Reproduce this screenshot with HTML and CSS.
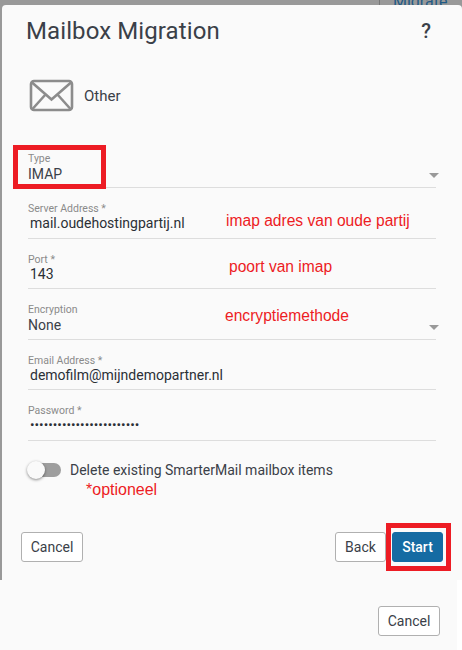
FILE: index.html
```html
<!DOCTYPE html>
<html lang="en">
<head>
    <meta charset="UTF-8">
    <meta name="viewport" content="width=device-width, initial-scale=1.0">
    <title>Mailbox Migration</title>
    <link rel="stylesheet" href="styles.css">
</head>
<body>
    <div class="backdrop">
        <div class="peek-link">Migrate</div>
        <div class="peek-line"></div>
        <div class="modal">
            <div class="modal-header">
                <h1 class="modal-title">Mailbox Migration</h1>
                <span class="help">?</span>
            </div>

            <div class="source">
                <svg class="source-icon" width="46" height="34" viewBox="0 0 46 34" fill="none" stroke="#8c8c8c" stroke-width="2.6">
                    <rect x="2" y="2" width="41" height="29" rx="3"/>
                    <path d="M3 3.5 L22.5 20.5 L42 3.5"/>
                    <path d="M3.5 30 L16.5 15.5"/>
                    <path d="M41.5 30 L28.5 15.5"/>
                </svg>
                <span class="source-name">Other</span>
            </div>

            <div class="fields">
                <div class="field">
                    <label class="field-label">Type</label>
                    <div class="field-select">IMAP</div>
                    <span class="caret"></span>
                </div>
                <div class="field">
                    <label class="field-label">Server Address *</label>
                    <div class="field-value">mail.oudehostingpartij.nl</div>
                    <span class="note note-server">imap adres van oude partij</span>
                </div>
                <div class="field">
                    <label class="field-label">Port *</label>
                    <div class="field-value">143</div>
                    <span class="note note-port">poort van imap</span>
                </div>
                <div class="field">
                    <label class="field-label">Encryption</label>
                    <div class="field-select">None</div>
                    <span class="caret"></span>
                    <span class="note note-encryption">encryptiemethode</span>
                </div>
                <div class="field">
                    <label class="field-label">Email Address *</label>
                    <div class="field-value">demofilm@mijndemopartner.nl</div>
                </div>
                <div class="field">
                    <label class="field-label">Password *</label>
                    <div class="field-value field-password">••••••••••••••••••••••••</div>
                </div>
            </div>

            <div class="toggle-row">
                <span class="toggle"><span class="toggle-knob"></span></span>
                <span class="toggle-label">Delete existing SmarterMail mailbox items</span>
            </div>
            <div class="note-optional">*optioneel</div>

            <div class="modal-footer">
                <button class="btn">Cancel</button>
                <div class="btn-group">
                    <button class="btn btn-back">Back</button>
                    <button class="btn btn-primary">Start</button>
                </div>
            </div>

            <div class="mark mark-type"></div>
            <div class="mark mark-start"></div>
        </div>
    </div>

    <div class="lower">
        <button class="btn">Cancel</button>
    </div>
</body>
</html>
```

FILE: styles.css
```css
* {
    margin: 0;
    padding: 0;
    box-sizing: border-box;
}

body {
    width: 462px;
    height: 650px;
    overflow: hidden;
    background: #fff;
    font-family: 'Roboto', sans-serif;
    color: #3a4048;
}

.backdrop {
    position: relative;
    height: 580px;
    padding: 5px 0 0 2px;
    background: #999;
    overflow: hidden;
}

.peek-link {
    position: absolute;
    left: 393px;
    top: -6px;
    font-size: 16px;
    line-height: 16px;
    color: #1f5a85;
}

.peek-line {
    position: absolute;
    left: 379px;
    top: 0;
    width: 1px;
    height: 5px;
    background: #777;
}

.modal {
    position: relative;
    height: 575px;
    background: #fafafa;
    border-radius: 4px 4px 0 0;
    padding: 0 26px;
}

.modal-header {
    display: flex;
    justify-content: space-between;
    align-items: center;
    height: 52px;
}

.modal-title {
    font-size: 24px;
    font-weight: 400;
    line-height: 52px;
    margin-left: -2px;
    letter-spacing: 0.1px;
}

.help {
    font-size: 20px;
    font-weight: 500;
    margin-right: 5px;
}

.source {
    display: flex;
    align-items: center;
    gap: 9px;
    height: 34px;
    margin-top: 22px;
    margin-left: 1px;
}

.source-name {
    font-size: 15px;
}

.fields {
    margin-top: 24.5px;
}

.field {
    position: relative;
    height: 50.6px;
    padding-top: 14px;
    border-bottom: 1px solid #ddd;
}

.field-label {
    display: block;
    font-size: 10.5px;
    line-height: 14px;
    color: #8a8a8a;
}

.field-select,
.field-value {
    font-size: 14px;
    line-height: 15px;
}

.field-select {
    padding-top: 1px;
}

.field-value {
    padding-left: 2px;
    color: #2b2f36;
}

.field-password {
    line-height: 12px;
    font-size: 13.5px;
}

.caret {
    position: absolute;
    right: -3px;
    bottom: 9px;
    width: 0;
    height: 0;
    border-left: 5px solid transparent;
    border-right: 5px solid transparent;
    border-top: 5px solid #999;
}

.note {
    position: absolute;
    font-family: 'Liberation Sans', sans-serif;
    font-size: 15.6px;
    line-height: 18px;
    color: #ed1c24;
}

.note-server {
    left: 198px;
    top: 24px;
}

.note-port {
    left: 201px;
    top: 19px;
}

.note-encryption {
    left: 197px;
    top: 18px;
}

.toggle-row {
    display: flex;
    align-items: center;
    gap: 9px;
    height: 20px;
    margin-top: 19px;
}

.toggle {
    position: relative;
    width: 31px;
    height: 14px;
    border-radius: 7px;
    background: #9e9e9e;
    margin-left: 2px;
}

.toggle-knob {
    position: absolute;
    left: -3px;
    top: -2px;
    width: 18px;
    height: 18px;
    border-radius: 50%;
    background: #fafafa;
    box-shadow: 0 1px 3px rgba(0, 0, 0, 0.45);
}

.toggle-label {
    font-size: 14px;
}

.note-optional {
    font-family: 'Liberation Sans', sans-serif;
    font-size: 16px;
    line-height: 18px;
    color: #ed1c24;
    margin-left: 58px;
    margin-top: 1px;
}

.modal-footer {
    display: flex;
    justify-content: space-between;
    margin: 33px -7px 0 -7px;
}

.btn-group {
    display: flex;
    gap: 6px;
}

.btn {
    width: 62px;
    height: 30px;
    font-family: 'Roboto', sans-serif;
    font-size: 14px;
    color: #3a4048;
    background: #fff;
    border: 1px solid #b0b0b0;
    border-radius: 3px;
}

.btn-back,
.btn-primary {
    width: 51px;
}

.btn-primary {
    color: #fff;
    font-weight: 500;
    background: #156ba3;
    border-color: #156ba3;
}

.mark {
    position: absolute;
    border: 5px solid #ed1c24;
}

.mark-type {
    left: 11px;
    top: 140px;
    width: 93px;
    height: 44px;
}

.mark-start {
    left: 384px;
    top: 518px;
    width: 65px;
    height: 48px;
}

.lower {
    display: flex;
    justify-content: flex-end;
    width: 457px;
    height: 70px;
    padding: 26px 17px 0 0;
    background: #fafafa;
}
```
